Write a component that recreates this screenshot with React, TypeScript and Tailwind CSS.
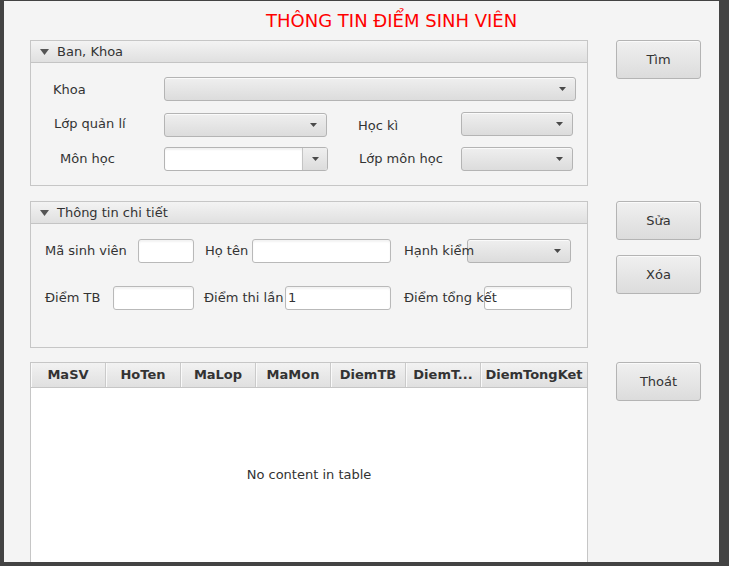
const font = { fontFamily: '"DejaVu Sans", Verdana, sans-serif' };

function Arrow() {
  return (
    <svg width="7" height="4" viewBox="0 0 7 4">
      <path d="M0 0h7L3.5 4z" fill="#4a4a4a" />
    </svg>
  );
}

function Combo({ className }: { className: string }) {
  return (
    <div
      className={`flex h-[24px] items-center justify-end rounded-[3px] border border-[#b4b4b4] bg-gradient-to-b from-[#efefef] to-[#dcdcdc] pr-[9px] shadow-[inset_0_1px_0_#fafafa] ${className}`}
    >
      <Arrow />
    </div>
  );
}

function EditCombo({ className }: { className: string }) {
  return (
    <div className={`flex h-[24px] overflow-hidden rounded-[3px] border border-[#b4b4b4] bg-white ${className}`}>
      <div className="flex-1 shadow-[inset_0_2px_2px_rgba(0,0,0,0.06)]" />
      <div className="flex w-[25px] items-center justify-center border-l border-[#c4c4c4] bg-gradient-to-b from-[#efefef] to-[#dcdcdc]">
        <Arrow />
      </div>
    </div>
  );
}

function Field({ className, value }: { className: string; value?: string }) {
  return (
    <div
      className={`flex h-[24px] items-center rounded-[3px] border border-[#b9b9b9] bg-white px-[2px] text-[13px] text-[#333] shadow-[inset_0_2px_2px_rgba(0,0,0,0.05)] ${className}`}
    >
      {value}
    </div>
  );
}

function Btn({ label, className }: { label: string; className: string }) {
  return (
    <div
      className={`flex h-[39px] w-[85px] items-center justify-center rounded-[3px] border border-[#b4b4b4] bg-gradient-to-b from-[#f0f0f0] to-[#dcdcdc] text-[13px] text-[#333] shadow-[inset_0_1px_0_#fafafa] ${className}`}
    >
      {label}
    </div>
  );
}

function PanelHeader({ title }: { title: string }) {
  return (
    <div className="flex h-[22px] items-center border-b border-[#c4c4c4] bg-gradient-to-b from-[#f3f3f3] to-[#e0e0e0] pl-[9px] text-[13px] text-[#333]">
      <svg width="9" height="6" viewBox="0 0 9 6" className="mr-[8px]">
        <path d="M0 0h9L4.5 6z" fill="#555" />
      </svg>
      <span>{title}</span>
    </div>
  );
}

const cols = ['MaSV', 'HoTen', 'MaLop', 'MaMon', 'DiemTB', 'DiemT...'];

export default function App() {
  return (
    <div className="h-[566px] w-[729px] bg-[#434343] pb-[4px] pl-[4px] pr-[10px] pt-[1px]" style={font}>
      <div className="h-[561px] w-[715px] overflow-hidden bg-[#f4f4f4] text-[#333]">
        <div className="pl-[262px] pt-[9px] text-[18px] leading-[21px] whitespace-nowrap text-[#ff0000]">
          THÔNG TIN ĐIỂM SINH VIÊN
        </div>

        <div className="mt-[9px] flex pl-[26px]">
          {/* left column */}
          <div className="flex w-[558px] flex-col">
            {/* Ban, Khoa */}
            <div className="h-[146px] border border-[#c6c6c6]">
              <PanelHeader title="Ban, Khoa" />
              <div className="flex flex-col pt-[14px] text-[13px]">
                <div className="flex items-center">
                  <span className="mt-[2px] w-[133px] whitespace-nowrap pl-[22px]">Khoa</span>
                  <Combo className="w-[412px]" />
                </div>
                <div className="mt-[12px] flex items-center">
                  <span className="mt-[-2px] w-[133px] whitespace-nowrap pl-[23px]">Lớp quản lí</span>
                  <Combo className="w-[163px]" />
                  <span className="ml-[31px] mt-[2px] w-[103px] whitespace-nowrap">Học kì</span>
                  <Combo className="mt-[-2px] w-[112px]" />
                </div>
                <div className="mt-[10px] flex items-center">
                  <span className="w-[133px] whitespace-nowrap pl-[29px]">Môn học</span>
                  <EditCombo className="w-[164px]" />
                  <span className="ml-[31px] w-[102px] whitespace-nowrap">Lớp môn học</span>
                  <Combo className="w-[112px]" />
                </div>
              </div>
            </div>

            {/* Thông tin chi tiết */}
            <div className="mt-[15px] h-[147px] border border-[#c6c6c6]">
              <PanelHeader title="Thông tin chi tiết" />
              <div className="flex flex-col pl-[14px] pt-[15px] text-[13px]">
                <div className="flex items-center">
                  <span className="w-[93px] whitespace-nowrap">Mã sinh viên</span>
                  <Field className="w-[56px]" />
                  <span className="ml-[11px] w-[47px] whitespace-nowrap">Họ tên</span>
                  <Field className="w-[139px]" />
                  <span className="relative z-10 ml-[13px] w-[63px] whitespace-nowrap">Hạnh kiểm</span>
                  <Combo className="w-[104px]" />
                </div>
                <div className="mt-[23px] flex items-center">
                  <span className="w-[68px] whitespace-nowrap">Điểm TB</span>
                  <Field className="w-[81px]" />
                  <span className="ml-[10px] w-[81px] whitespace-nowrap">Điểm thi lần</span>
                  <Field className="w-[106px]" value="1" />
                  <span className="relative z-10 ml-[13px] w-[80px] whitespace-nowrap">Điểm tổng kết</span>
                  <Field className="w-[88px]" />
                </div>
              </div>
            </div>

            {/* table */}
            <div className="mt-[14px] flex h-[210px] flex-col border border-[#c6c6c6] bg-white">
              <div className="flex h-[25px] border-b border-[#c6c6c6] text-[13px] font-bold text-[#333]">
                {cols.map((c) => (
                  <div
                    key={c}
                    className="flex w-[75px] items-center justify-center border-r border-[#cacaca] bg-gradient-to-b from-[#f2f2f2] to-[#e0e0e0] shadow-[inset_1px_0_0_#fafafa] whitespace-nowrap"
                  >
                    {c}
                  </div>
                ))}
                <div className="flex flex-1 items-center justify-center bg-gradient-to-b from-[#f2f2f2] to-[#e0e0e0] shadow-[inset_1px_0_0_#fafafa] whitespace-nowrap">
                  DiemTongKet
                </div>
              </div>
              <div className="flex h-[173px] items-center justify-center text-[13px] text-[#333]">
                No content in table
              </div>
            </div>
          </div>

          {/* right column */}
          <div className="ml-[28px] flex flex-col">
            <Btn label="Tìm" className="" />
            <Btn label="Sửa" className="mt-[122px]" />
            <Btn label="Xóa" className="mt-[15px]" />
            <Btn label="Thoát" className="mt-[68px]" />
          </div>
        </div>
      </div>
    </div>
  );
}
